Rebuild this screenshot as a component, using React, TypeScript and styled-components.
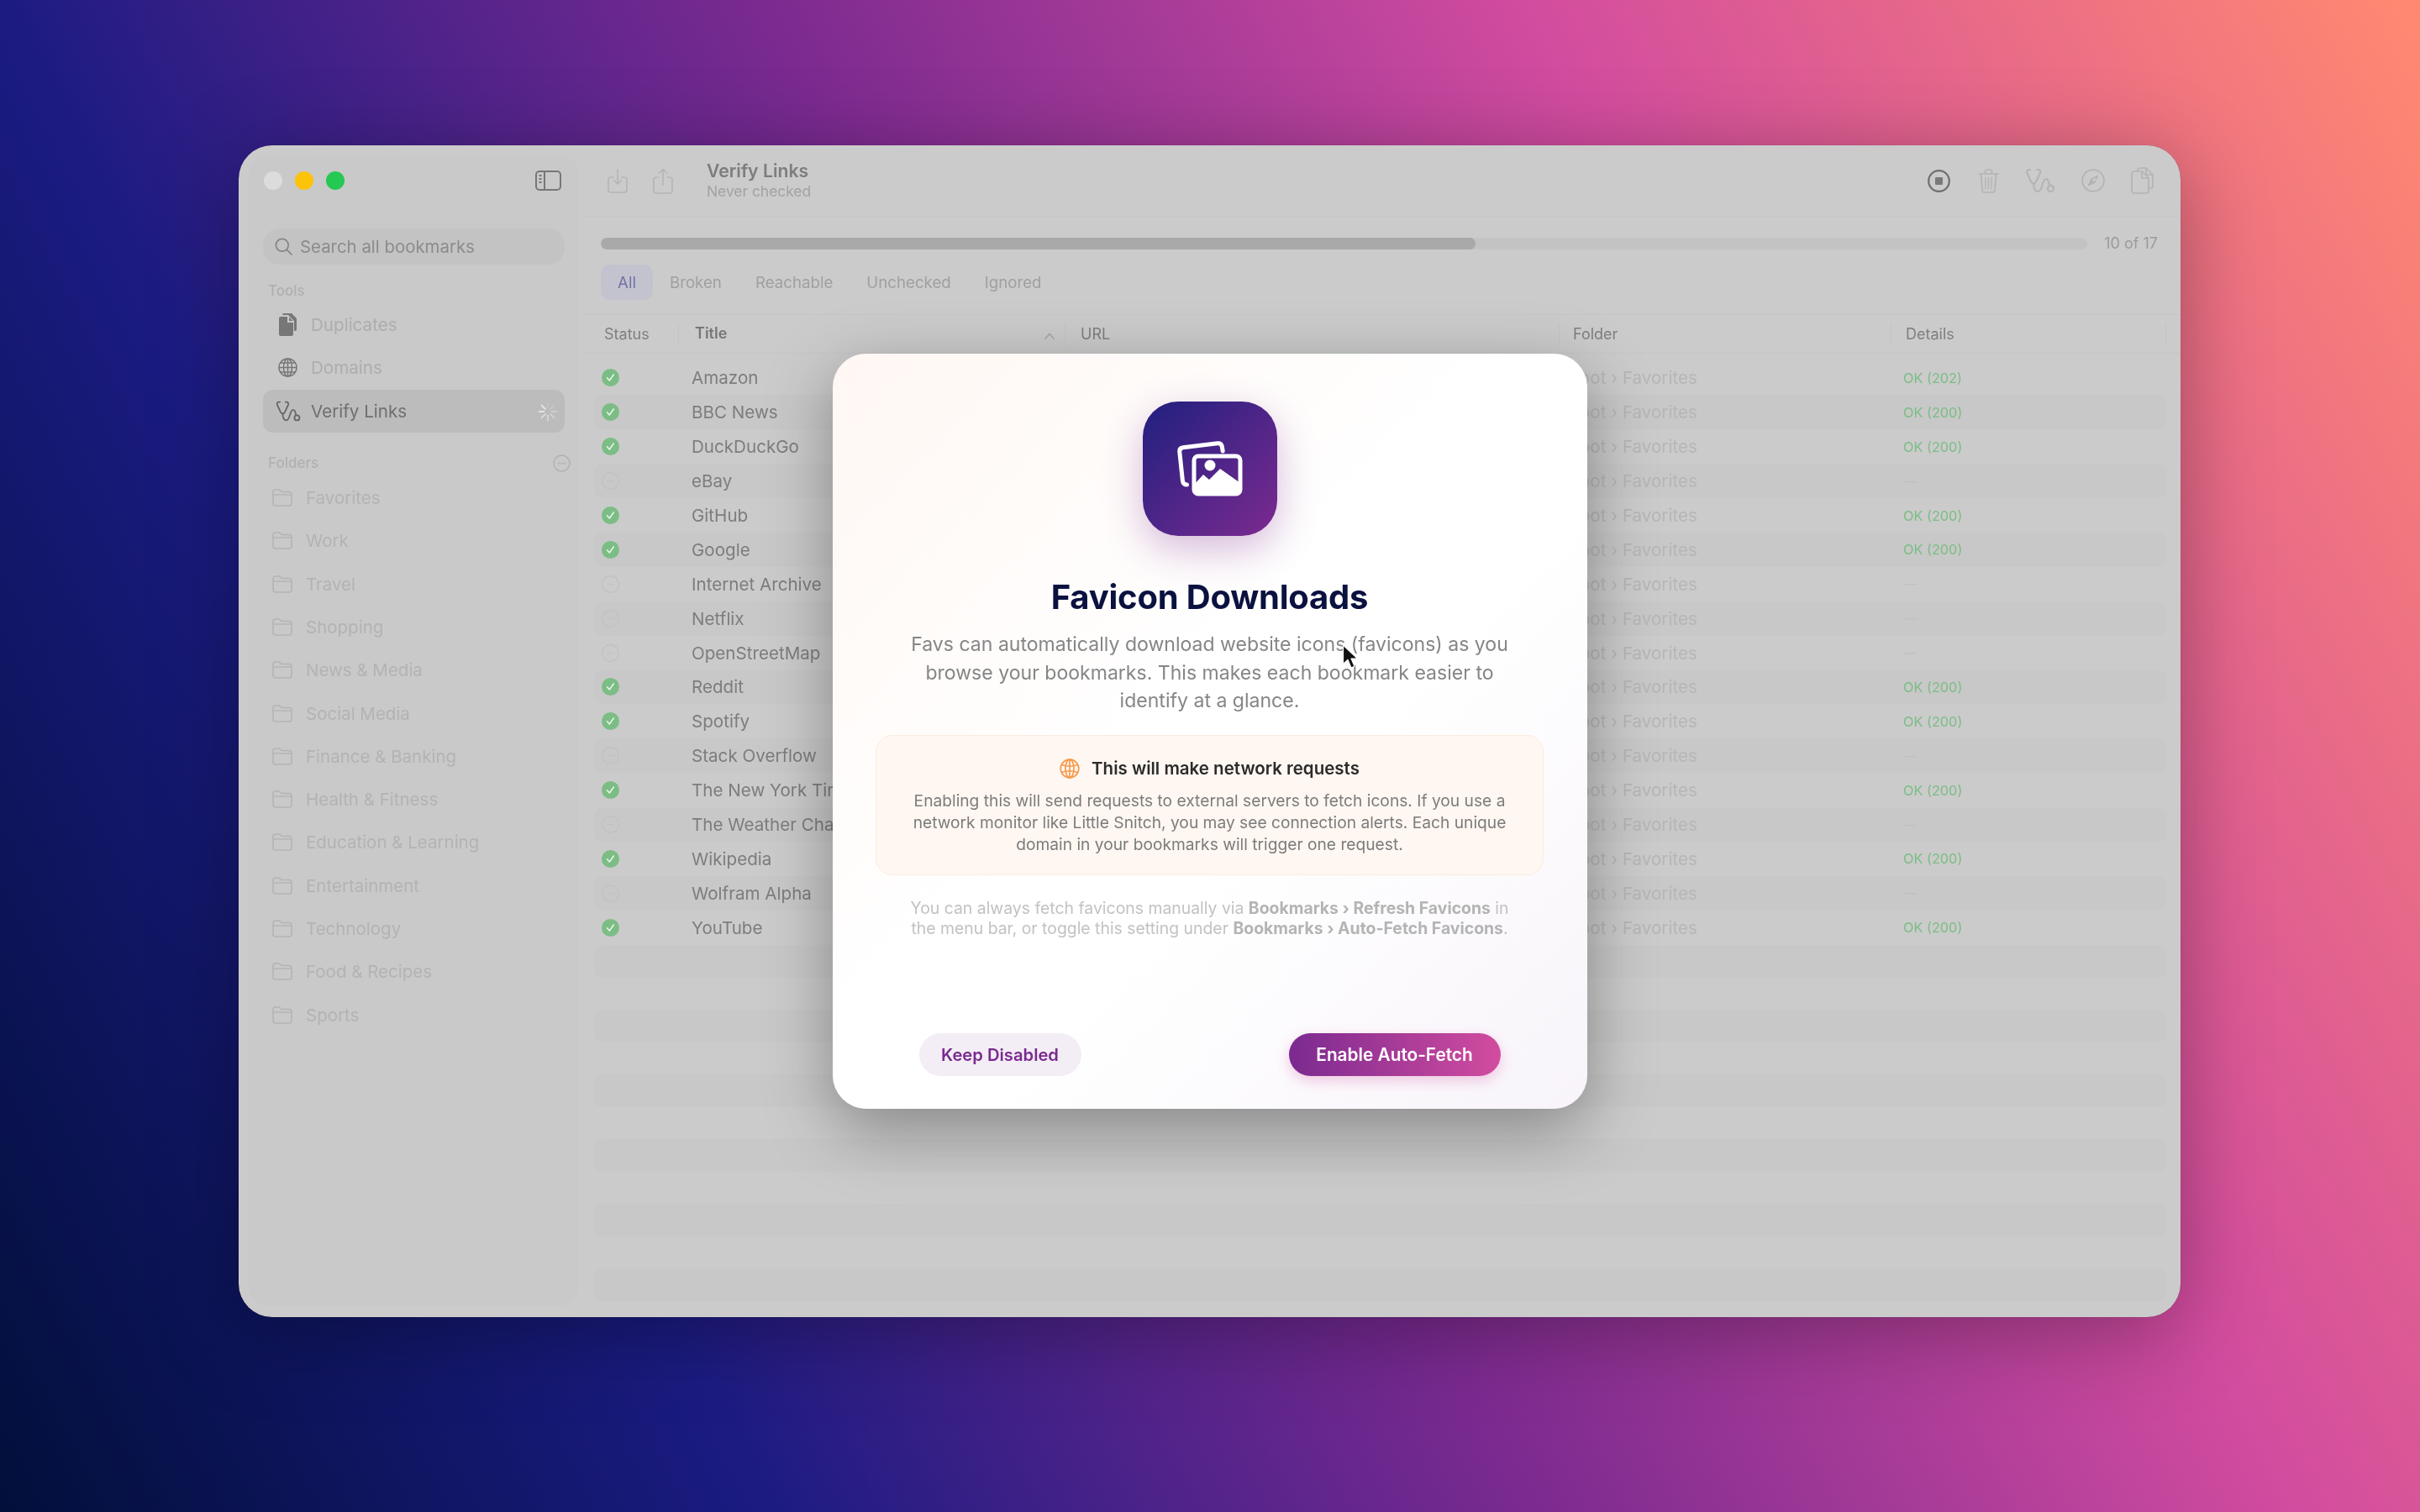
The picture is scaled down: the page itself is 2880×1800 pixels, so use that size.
import React from "react";
import styled, { createGlobalStyle } from "styled-components";

const GlobalStyle = createGlobalStyle`
  html, body {
    margin: 0;
    padding: 0;
    width: 2880px;
    height: 1800px;
    overflow: hidden;
    font-family: Inter, "Noto Sans", sans-serif;
  }
  * { box-sizing: border-box; }
`;

const TOOLS = [
  { name: "Duplicates", icon: <DocsFilledIcon /> },
  { name: "Domains", icon: <GlobeIcon /> },
];

const FOLDERS = [
  "Favorites", "Work", "Travel", "Shopping", "News & Media", "Social Media", "Finance & Banking",
  "Health & Fitness", "Education & Learning", "Entertainment", "Technology", "Food & Recipes", "Sports",
];

const LINKS = [
  { title: "Amazon", details: "OK (202)" },
  { title: "BBC News", details: "OK (200)" },
  { title: "DuckDuckGo", details: "OK (200)" },
  { title: "eBay", details: "—" },
  { title: "GitHub", details: "OK (200)" },
  { title: "Google", details: "OK (200)" },
  { title: "Internet Archive", details: "—" },
  { title: "Netflix", details: "—" },
  { title: "OpenStreetMap", details: "—" },
  { title: "Reddit", details: "OK (200)" },
  { title: "Spotify", details: "OK (200)" },
  { title: "Stack Overflow", details: "—" },
  { title: "The New York Times", details: "OK (200)" },
  { title: "The Weather Channel", details: "—" },
  { title: "Wikipedia", details: "OK (200)" },
  { title: "Wolfram Alpha", details: "—" },
  { title: "YouTube", details: "OK (200)" },
];

const TABS = ["All", "Broken", "Reachable", "Unchecked", "Ignored"];

export default function App() {
  return (
    <Page>
      <GlobalStyle />
      <Window>
        <Sidebar>
          <SidebarTop>
            <Lights>
              <Light $color="#dcdcdc" />
              <Light $color="#fdc20a" />
              <Light $color="#25c853" />
            </Lights>
            <PanelIcon />
          </SidebarTop>
          <SearchBox>
            <SearchIcon />
            Search all bookmarks
          </SearchBox>
          <SectionLabel $top={20}>Tools</SectionLabel>
          <NavList>
            {TOOLS.map((t) => (
              <NavRow key={t.name}>
                <NavIcon>{t.icon}</NavIcon>
                {t.name}
              </NavRow>
            ))}
            <NavRow $active>
              <NavIcon>
                <StethoscopeIcon size={30} color="#666" />
              </NavIcon>
              Verify Links
              <SpinnerIcon />
            </NavRow>
          </NavList>
          <SectionLabel $top={25}>
            Folders
            <MoreIcon />
          </SectionLabel>
          <FolderList>
            {FOLDERS.map((f) => (
              <FolderRow key={f}>
                <FolderIcon />
                {f}
              </FolderRow>
            ))}
          </FolderList>
        </Sidebar>

        <Main>
          <Toolbar>
            <ToolGroup>
              <ImportIcon />
              <ShareIcon />
            </ToolGroup>
            <ToolbarTitle>
              <h1>Verify Links</h1>
              <span>Never checked</span>
            </ToolbarTitle>
            <ToolActions>
              <StopIcon />
              <TrashIcon />
              <StethoscopeIcon size={36} color="#b4b4b4" />
              <CompassIcon />
              <CopyIcon />
            </ToolActions>
          </Toolbar>

          <ProgressRow>
            <ProgressTrack>
              <ProgressFill style={{ width: `${(10 / 17) * 100}%` }} />
            </ProgressTrack>
            <ProgressLabel>10 of 17</ProgressLabel>
          </ProgressRow>

          <Tabs>
            {TABS.map((t, i) => (
              <Tab key={t} $active={i === 0}>
                {t}
              </Tab>
            ))}
          </Tabs>

          <TableHead>
            <HeadCell $pad={12}>Status</HeadCell>
            <HeadCell $pad={19} $strong>
              Title
              <SortIcon />
            </HeadCell>
            <HeadCell $pad={18}>URL</HeadCell>
            <HeadCell $pad={16}>Folder</HeadCell>
            <HeadCell $pad={17}>Details</HeadCell>
          </TableHead>

          <TableBody>
            {LINKS.map((l, i) => (
              <Row key={l.title} $band={i % 2 === 1}>
                <StatusCell>{l.details === "—" ? <EmptyStatus /> : <OkStatus />}</StatusCell>
                <TitleCell>{l.title}</TitleCell>
                <span />
                <FolderCell>Root › Favorites</FolderCell>
                <DetailsCell $ok={l.details !== "—"}>{l.details}</DetailsCell>
              </Row>
            ))}
            <Fillers>
              {[0, 1, 2, 3, 4, 5].map((n) => (
                <Filler key={n} />
              ))}
            </Fillers>
          </TableBody>
        </Main>

        <Scrim>
          <Modal>
            <AppIcon>
              <PhotosIcon />
            </AppIcon>
            <ModalTitle>Favicon Downloads</ModalTitle>
            <Lead>
              Favs can automatically download website icons (favicons) as you
              <br />
              browse your bookmarks. This makes each bookmark easier to
              <br />
              identify at a glance.
            </Lead>
            <Notice>
              <NoticeHead>
                <NetworkIcon />
                This will make network requests
              </NoticeHead>
              <NoticeBody>
                Enabling this will send requests to external servers to fetch icons. If you use a
                <br />
                network monitor like Little Snitch, you may see connection alerts. Each unique
                <br />
                domain in your bookmarks will trigger one request.
              </NoticeBody>
            </Notice>
            <Footnote>
              You can always fetch favicons manually via <b>Bookmarks › Refresh Favicons</b> in
              <br />
              the menu bar, or toggle this setting under <b>Bookmarks › Auto-Fetch Favicons</b>.
            </Footnote>
            <Actions>
              <SecondaryButton>Keep Disabled</SecondaryButton>
              <PrimaryButton>Enable Auto-Fetch</PrimaryButton>
            </Actions>
            <Cursor />
          </Modal>
        </Scrim>
      </Window>
    </Page>
  );
}

function PanelIcon() {
  return (
    <svg width="31" height="24" viewBox="0 0 31 24" fill="none" stroke="#777" strokeWidth="2">
      <rect x="1" y="1" width="29" height="22" rx="4" />
      <path d="M11 1v22" />
      <path d="M4.5 6h3M4.5 10h3M4.5 14h3" strokeWidth="1.8" />
    </svg>
  );
}

function SearchIcon() {
  return (
    <svg width="21" height="21" viewBox="0 0 21 21" fill="none" stroke="#858585" strokeWidth="1.7">
      <circle cx="8.8" cy="8.8" r="7.4" />
      <path d="M14.2 14.2 20 20" strokeLinecap="round" />
    </svg>
  );
}

function DocsFilledIcon() {
  return (
    <svg width="22" height="27" viewBox="0 0 22 27">
      <path d="M6 0h9l6 6v13a2 2 0 0 1-2 2h-1V9l-7-7H4a2 2 0 0 1 2-2z" fill="#777" />
      <path d="M2 4h8v7h7v14a2 2 0 0 1-2 2H2a2 2 0 0 1-2-2V6a2 2 0 0 1 2-2z" fill="#777" />
      <path d="M12 4.5 16.5 9H12z" fill="#777" />
    </svg>
  );
}

function GlobeIcon() {
  return (
    <svg width="23" height="23" viewBox="0 0 23 23" fill="none" stroke="#777" strokeWidth="1.5">
      <circle cx="11.5" cy="11.5" r="10.5" />
      <ellipse cx="11.5" cy="11.5" rx="5" ry="10.5" />
      <path d="M11.5 1v21M1 11.5h21M2.6 6h17.8M2.6 17h17.8" />
    </svg>
  );
}

function StethoscopeIcon({ size, color }: { size: number; color: string }) {
  return (
    <svg width={size} height={(size * 30) / 36} viewBox="0 0 36 30" fill="none" stroke={color} strokeWidth="2.2" strokeLinecap="round">
      <path d="M6 2H4.5C2.5 2 1.6 3.8 2.3 5.8L7 16c1.6 3.2 4.7 3.2 6.3 0L18 5.8C18.7 3.8 17.8 2 15.8 2h-1.5" />
      <path d="M10.2 18.5c0 6 1.6 9.5 5.3 9.5 5.5 0 4.5-15 9.5-15 2.8 0 3.3 3.5 4 7" />
      <circle cx="30.5" cy="24.5" r="3.6" />
    </svg>
  );
}

function SpinnerIcon() {
  const spokes = [0, 45, 90, 135, 180, 225, 270, 315];
  return (
    <SpinnerBox>
      <svg width="24" height="24" viewBox="0 0 24 24" strokeWidth="1.8" strokeLinecap="round">
        {spokes.map((a, i) => (
          <path key={a} d="M12 1.500v6" stroke="#fff" opacity={0.1 + i * 0.08} transform={`rotate(${a} 12 12)`} />
        ))}
      </svg>
    </SpinnerBox>
  );
}

function MoreIcon() {
  return (
    <MoreBox>
      <svg width="21" height="21" viewBox="0 0 21 21" fill="none" stroke="#b0b0b0" strokeWidth="1.4">
        <circle cx="10.5" cy="10.5" r="9.5" />
        <path d="M6.5 10.5h.6M10.2 10.5h.6M13.9 10.5h.6" strokeWidth="1.8" strokeLinecap="round" />
      </svg>
    </MoreBox>
  );
}

function FolderIcon() {
  return (
    <svg width="24" height="21" viewBox="0 0 24 21" fill="none" stroke="#b4b4b4" strokeWidth="1.6">
      <path d="M1 4a3 3 0 0 1 3-3h4.5l2.5 2.5h9a3 3 0 0 1 3 3V17a3 3 0 0 1-3 3H4a3 3 0 0 1-3-3z" />
      <path d="M1 7h22" />
    </svg>
  );
}

function ImportIcon() {
  return (
    <svg width="24" height="29" viewBox="0 0 24 29" fill="none" stroke="#b6b6b6" strokeWidth="1.7" strokeLinecap="round" strokeLinejoin="round">
      <path d="M7 10H4a3 3 0 0 0-3 3v12a3 3 0 0 0 3 3h16a3 3 0 0 0 3-3V13a3 3 0 0 0-3-3h-3" />
      <path d="M12 1v17M7.5 13.5 12 18l4.5-4.5" />
    </svg>
  );
}

function ShareIcon() {
  return (
    <svg width="24" height="31" viewBox="0 0 24 31" fill="none" stroke="#b6b6b6" strokeWidth="1.7" strokeLinecap="round" strokeLinejoin="round">
      <path d="M7 11H4a3 3 0 0 0-3 3v13a3 3 0 0 0 3 3h16a3 3 0 0 0 3-3V14a3 3 0 0 0-3-3h-3" />
      <path d="M12 20V1.5M7.5 6 12 1.5 16.5 6" />
    </svg>
  );
}

function StopIcon() {
  return (
    <StopBox>
      <svg width="27" height="27" viewBox="0 0 27 27" fill="none">
        <circle cx="13.5" cy="13.5" r="12.3" stroke="#6e6e6e" strokeWidth="2.2" />
        <rect x="9" y="9" width="9" height="9" rx="1.2" fill="#7a7a7a" />
      </svg>
    </StopBox>
  );
}

function TrashIcon() {
  return (
    <svg width="25" height="29" viewBox="0 0 25 29" fill="none" stroke="#b4b4b4" strokeWidth="1.7" strokeLinecap="round" strokeLinejoin="round">
      <path d="M1 6h23M8.5 6V3a2 2 0 0 1 2-2h4a2 2 0 0 1 2 2v3" />
      <path d="M3.5 6 5 25.5A2.6 2.6 0 0 0 7.6 28h9.8a2.6 2.6 0 0 0 2.6-2.5L21.5 6" />
      <path d="M8.7 10.5 9.2 24M12.5 10.5V24M16.3 10.5 15.8 24" strokeWidth="1.3" />
    </svg>
  );
}

function CompassIcon() {
  return (
    <svg width="28" height="28" viewBox="0 0 28 28" fill="none">
      <circle cx="14" cy="14" r="12.9" stroke="#b4b4b4" strokeWidth="1.8" />
      <path d="M19.5 8.5 16 16l-7.500 3.500L12 12z" stroke="#b4b4b4" strokeWidth="1.4" strokeLinejoin="round" />
      <path d="M16 16l-7.500 3.500L12 12z" fill="#b4b4b4" />
    </svg>
  );
}

function CopyIcon() {
  return (
    <svg width="27" height="32" viewBox="0 0 27 32" fill="none" stroke="#b4b4b4" strokeWidth="1.7" strokeLinejoin="round">
      <path d="M8 5V4a3 3 0 0 1 3-3h7l8 8v13a3 3 0 0 1-3 3h-2" />
      <path d="M18 1v8h8" />
      <path d="M4 5h9l8 8v15a3 3 0 0 1-3 3H4a3 3 0 0 1-3-3V8a3 3 0 0 1 3-3z" />
      <path d="M13 5v8h8" />
    </svg>
  );
}

function SortIcon() {
  return (
    <SortBox>
      <svg width="12" height="8" viewBox="0 0 12 8" fill="none" stroke="#a8a8a8" strokeWidth="1.7" strokeLinecap="round" strokeLinejoin="round">
        <path d="M1 7l5-5.500L11 7" />
      </svg>
    </SortBox>
  );
}

function OkStatus() {
  return (
    <svg width="21" height="21" viewBox="0 0 21 21">
      <circle cx="10.500" cy="10.500" r="10.500" fill="#7cbd85" />
      <path d="M6.500 10.800 9.300 14l5-7" fill="none" stroke="#e8f3e9" strokeWidth="1.600" strokeLinecap="round" strokeLinejoin="round" />
    </svg>
  );
}

function EmptyStatus() {
  return (
    <svg width="21" height="21" viewBox="0 0 21 21" fill="none" stroke="#c0c0c0" strokeWidth="1.200">
      <circle cx="10.500" cy="10.500" r="9.900" />
      <path d="M7 10.500h7" />
    </svg>
  );
}

function PhotosIcon() {
  return (
    <svg width="78" height="66" viewBox="0 0 78 66" fill="none">
      <path d="M11.500 52C8.500 52 7 50.500 6.500 48L2.800 13C2.500 10 4 8.200 7 7.800L48 2.800C51 2.500 52.800 4 53.300 6.500L54.200 12" stroke="#fff" strokeWidth="5" strokeLinecap="round" strokeLinejoin="round" />
      <rect x="20" y="18" width="55" height="45" rx="5" stroke="#fff" strokeWidth="5" />
      <path d="M20 52 31 40l7 6 13-13 24 17v8a5 5 0 0 1-5 5H25a5 5 0 0 1-5-5z" fill="#fff" />
      <circle cx="39" cy="29" r="6.500" fill="#fff" />
    </svg>
  );
}

function NetworkIcon() {
  return (
    <svg width="24" height="24" viewBox="0 0 24 24" fill="none" stroke="#f79a4c" strokeWidth="1.700">
      <circle cx="12" cy="12" r="10.800" />
      <ellipse cx="12" cy="12" rx="5" ry="10.800" />
      <path d="M2.500 7.500C8 9.500 16 9.500 21.500 7.500M2.500 16.500C8 14.500 16 14.500 21.500 16.500M12 1v22" />
    </svg>
  );
}

function Cursor() {
  return (
    <CursorBox>
      <svg width="20" height="30" viewBox="0 0 20 30">
        <path d="M1.500 1v22.500l5.500-5 4 9.500 4-1.800-4-9.200h7.500z" fill="#111" stroke="#fff" strokeWidth="1.200" strokeLinejoin="round" />
      </svg>
    </CursorBox>
  );
}

const Page = styled.div`
  width: 2880px;
  height: 1800px;
  display: flex;
  padding: 173px 285px 232px 284px;
  background: linear-gradient(63deg, #020f3a 0%, #1b1b82 24%, #7b2a90 48%, #d24c9f 72%, #ff8a70 100%);
`;

const Window = styled.div`
  position: relative;
  flex: 1;
  display: flex;
  border-radius: 40px;
  overflow: hidden;
  background: #cbcbcb;
  box-shadow: 0 0 1px rgba(0, 0, 0, 0.4);
  filter: drop-shadow(0 18px 50px rgba(0, 0, 0, 0.32));
`;

const Sidebar = styled.aside`
  width: 393px;
  margin: 12px 2px 13px 12px;
  padding: 18px 17px 0;
  border-radius: 24px;
  background: #c9c9c9;
  display: flex;
  flex-direction: column;
`;

const SidebarTop = styled.div`
  height: 24px;
  display: flex;
  align-items: center;
  justify-content: space-between;
  padding-right: 4px;
`;

const Lights = styled.div`
  display: flex;
  gap: 15px;
  padding-left: 1px;
`;

const Light = styled.span<{ $color: string }>`
  width: 22px;
  height: 22px;
  border-radius: 50%;
  background: ${(p) => p.$color};
`;

const SearchBox = styled.div`
  margin-top: 45px;
  height: 43px;
  border-radius: 20px;
  background: #c3c3c3;
  display: flex;
  align-items: center;
  gap: 9px;
  padding-left: 14px;
  font-size: 20.4px;
  color: #8c8c8c;
`;

const SectionLabel = styled.div<{ $top: number }>`
  margin-top: ${(p) => p.$top}px;
  height: 22px;
  padding-left: 6px;
  position: relative;
  display: flex;
  align-items: center;
  font-size: 17px;
  font-weight: 500;
  color: #b0b0b0;
`;

const MoreBox = styled.span`
  position: absolute;
  right: -7px;
  top: 1px;
  display: flex;
`;

const NavList = styled.div`
  margin-top: 4px;
  display: flex;
  flex-direction: column;
`;

const NavRow = styled.div<{ $active?: boolean }>`
  position: relative;
  height: 51.3px;
  display: flex;
  align-items: center;
  border-radius: 12px;
  font-size: 20.6px;
  color: ${(p) => (p.$active ? "#6f6f6f" : "#adadad")};
  background: ${(p) => (p.$active ? "#bcbcbc" : "transparent")};
`;

const NavIcon = styled.span`
  width: 57px;
  display: flex;
  justify-content: center;
  padding-left: 2px;
`;

const SpinnerBox = styled.span`
  position: absolute;
  right: 8px;
  top: 14px;
  display: flex;
`;

const FolderList = styled.div`
  margin-top: 5px;
  display: flex;
  flex-direction: column;
`;

const FolderRow = styled.div`
  height: 51.3px;
  display: flex;
  align-items: center;
  gap: 16px;
  padding-left: 11px;
  font-size: 20.5px;
  color: #b3b3b3;
`;

const Main = styled.main`
  flex: 1;
  min-width: 0;
  display: flex;
  flex-direction: column;
`;

const Toolbar = styled.header`
  height: 85px;
  flex: none;
  display: flex;
  align-items: center;
  padding: 0 32px;
  border-bottom: 1px solid #c6c6c6;
`;

const ToolGroup = styled.div`
  display: flex;
  align-items: center;
  gap: 30px;
`;

const ToolbarTitle = styled.div`
  margin-left: 40px;
  margin-top: -1px;
  display: flex;
  flex-direction: column;
  gap: 2px;

  h1 {
    margin: 0;
    font-size: 21.2px;
    line-height: 24px;
    font-weight: 600;
    color: #7d7d7d;
  }

  span {
    font-size: 17.4px;
    line-height: 21px;
    color: #a2a2a2;
  }
`;

const ToolActions = styled.div`
  margin-left: auto;
  display: flex;
  align-items: center;
  gap: 31px;
`;

const StopBox = styled.span`
  display: flex;
  margin-right: 2px;
`;

const ProgressRow = styled.div`
  flex: none;
  padding: 25px 27px 0 24px;
  display: flex;
  align-items: center;
  gap: 20px;
`;

const ProgressTrack = styled.div`
  flex: 1;
  height: 14px;
  border-radius: 7px;
  background: #c3c3c3;
  overflow: hidden;
`;

const ProgressFill = styled.div`
  height: 100%;
  border-radius: 7px;
  background: #a9a9a9;
`;

const ProgressLabel = styled.span`
  line-height: 14px;
  font-size: 18px;
  color: #9b9b9b;
`;

const Tabs = styled.nav`
  flex: none;
  margin-top: 18px;
  padding: 0 0 17px 24px;
  display: flex;
  border-bottom: 1px solid #c5c5c5;
`;

const Tab = styled.span<{ $active: boolean }>`
  height: 42px;
  padding: 0 20px;
  display: flex;
  align-items: center;
  border-radius: 10px;
  font-size: 18.7px;
  color: ${(p) => (p.$active ? "#7272a8" : "#a0a0a0")};
  background: ${(p) => (p.$active ? "#c3c3cf" : "transparent")};
`;

const TableHead = styled.div`
  flex: none;
  height: 46px;
  padding-left: 16px;
  display: grid;
  grid-template-columns: 101px 460px 588px 395px 327px;
  align-items: center;
  border-bottom: 1px solid #c5c5c5;
`;

const HeadCell = styled.div<{ $pad: number; $strong?: boolean }>`
  position: relative;
  height: 26px;
  display: flex;
  align-items: center;
  padding-left: ${(p) => p.$pad}px;
  padding-bottom: ${(p) => (p.$strong ? 3 : 0)}px;
  border-right: 1px solid #c4c4c4;
  font-size: 18px;
  font-weight: ${(p) => (p.$strong ? 600 : 400)};
  color: ${(p) => (p.$strong ? "#777" : "#7f7f7f")};
`;

const SortBox = styled.span`
  position: absolute;
  right: 12px;
  top: 11px;
  display: flex;
`;

const TableBody = styled.div`
  flex: 1;
  padding: 8.5px 17px 0 16px;
  display: flex;
  flex-direction: column;
`;

const Row = styled.div<{ $band: boolean }>`
  height: 40.9px;
  flex: none;
  display: grid;
  grid-template-columns: 116px 463px 581px 398px 1fr;
  align-items: center;
  border-radius: 10px;
  background: ${(p) => (p.$band ? "#c8c8c8" : "transparent")};
`;

const StatusCell = styled.span`
  padding-left: 9px;
  display: flex;
`;

const TitleCell = styled.span`
  font-size: 20.6px;
  color: #7d7d7d;
  white-space: nowrap;
`;

const FolderCell = styled.span`
  font-size: 20.6px;
  color: #b6b6b6;
  white-space: nowrap;
`;

const DetailsCell = styled.span<{ $ok: boolean }>`
  font-size: 16.3px;
  color: ${(p) => (p.$ok ? "#7cbd85" : "#c0c0c0")};
`;

const Fillers = styled.div`
  display: flex;
  flex-direction: column;
  gap: 37.5px;
`;

const Filler = styled.div`
  height: 39.5px;
  border-radius: 10px;
  background: #c8c8c8;
`;

const Scrim = styled.div`
  position: absolute;
  inset: 0;
  display: flex;
  align-items: center;
  justify-content: center;
`;

const Modal = styled.section`
  position: relative;
  width: 898px;
  height: 899px;
  padding: 57px 0 39px;
  border-radius: 40px;
  display: flex;
  flex-direction: column;
  align-items: center;
  background: linear-gradient(135deg, #fff7f3 0%, #ffffff 45%, #ffffff 60%, #f8f4fa 100%);
  box-shadow: 0 24px 80px rgba(0, 0, 0, 0.34);
`;

const AppIcon = styled.div`
  width: 160px;
  height: 160px;
  flex: none;
  border-radius: 42px;
  display: flex;
  align-items: center;
  justify-content: center;
  background: linear-gradient(135deg, #20207f 0%, #7c2a90 100%);
  box-shadow: 0 16px 48px rgba(123, 42, 144, 0.32);
`;

const ModalTitle = styled.h2`
  margin: 48.5px 0 0;
  font-size: 40px;
  line-height: 48px;
  font-weight: 700;
  letter-spacing: -0.005em;
  color: #0b1240;
`;

const Lead = styled.p`
  margin: 16.5px 0 0;
  font-size: 23.05px;
  line-height: 33.5px;
  text-align: center;
  white-space: nowrap;
  color: #868686;
`;

const Notice = styled.div`
  margin-top: 23px;
  width: 795px;
  height: 167px;
  flex: none;
  padding-top: 26px;
  border-radius: 20px;
  border: 1px solid #fcebdd;
  background: #fff7f1;
  display: flex;
  flex-direction: column;
  align-items: center;
`;

const NoticeHead = styled.div`
  display: flex;
  align-items: center;
  gap: 14px;
  height: 26px;
  font-size: 20.5px;
  font-weight: 600;
  color: #2b2b2b;
`;

const NoticeBody = styled.p`
  margin: 12px 0 0;
  font-size: 19.2px;
  line-height: 26.4px;
  text-align: center;
  white-space: nowrap;
  color: #7c7c7c;
`;

const Footnote = styled.p`
  margin: 27px 0 0;
  font-size: 19.4px;
  line-height: 24px;
  text-align: center;
  white-space: nowrap;
  color: #c2c2c2;

  b {
    font-weight: 700;
    color: #b4b4b4;
  }
`;

const Actions = styled.div`
  margin-top: auto;
  width: 100%;
  padding: 0 103px;
  display: flex;
  justify-content: space-between;
`;

const SecondaryButton = styled.button`
  width: 193px;
  height: 51px;
  border: none;
  border-radius: 26px;
  font: 600 20.2px Inter, sans-serif;
  color: #7b2a90;
  background: #f3eef5;
`;

const PrimaryButton = styled.button`
  width: 252px;
  height: 51px;
  border: none;
  border-radius: 26px;
  font: 600 20.8px Inter, sans-serif;
  color: #fff;
  background: linear-gradient(90deg, #7b2a90 0%, #d24c9f 100%);
  box-shadow: 0 6px 16px rgba(210, 76, 159, 0.28);
`;

const CursorBox = styled.span`
  position: absolute;
  left: 606px;
  top: 346px;
  display: flex;
`;
